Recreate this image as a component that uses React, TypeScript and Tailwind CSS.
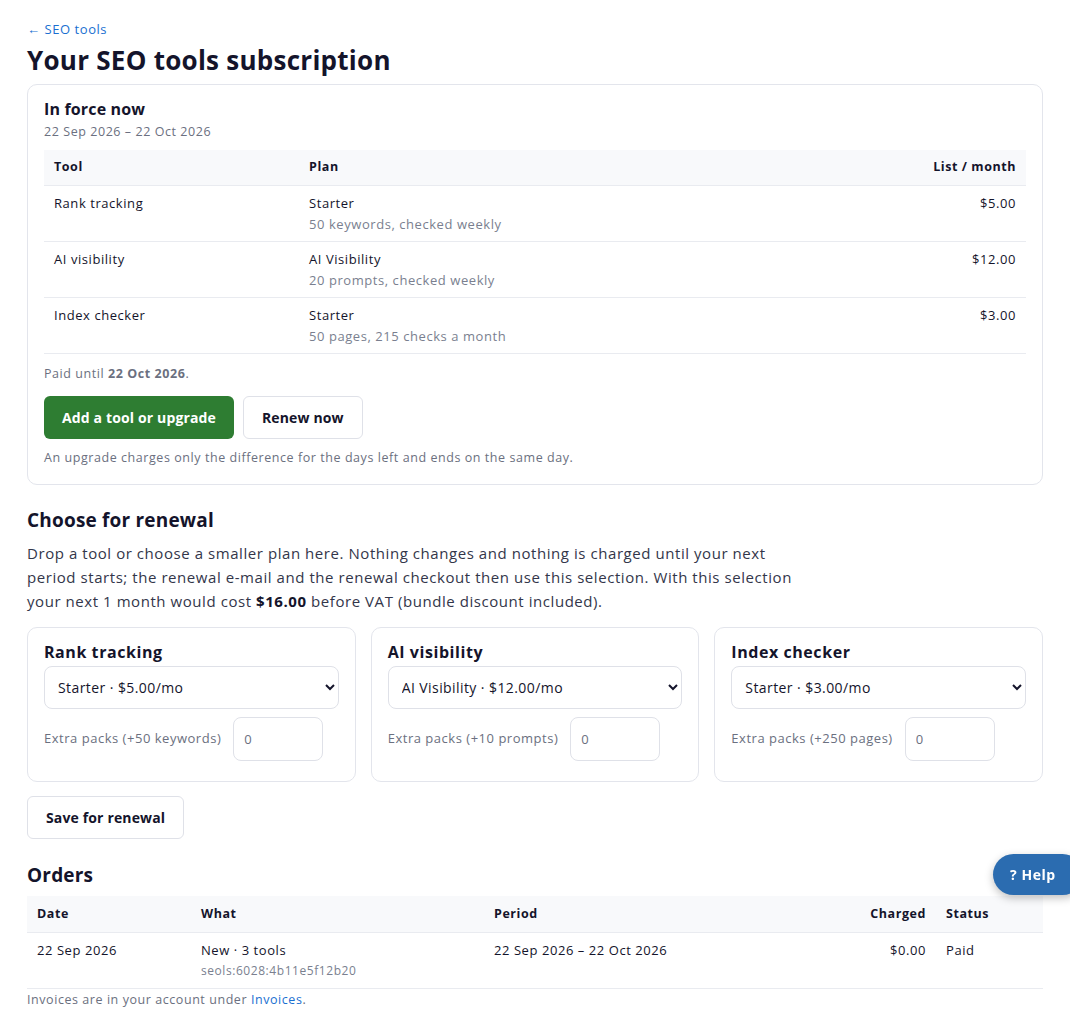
import { useState } from "react";

const CURRENT = [
  { tool: "Rank tracking", plan: "Starter", note: "50 keywords, checked weekly", price: "$5.00" },
  { tool: "AI visibility", plan: "AI Visibility", note: "20 prompts, checked weekly", price: "$12.00" },
  { tool: "Index checker", plan: "Starter", note: "50 pages, 215 checks a month", price: "$3.00" },
];

const RENEWAL = [
  { title: "Rank tracking", option: "Starter · $5.00/mo", extra: "Extra packs (+50 keywords)" },
  { title: "AI visibility", option: "AI Visibility · $12.00/mo", extra: "Extra packs (+10 prompts)" },
  { title: "Index checker", option: "Starter · $3.00/mo", extra: "Extra packs (+250 pages)" },
];

function RenewalCard({ title, option, extra }: { title: string; option: string; extra: string }) {
  const [packs, setPacks] = useState("0");
  return (
    <div className="rounded-[10px] border border-[#e3e5ec] bg-white px-4 pt-[13px] pb-5">
      <h3 className="text-[16px] font-bold leading-[22px] text-[#14142b]">{title}</h3>
      <select className="mt-[3px] h-[43px] w-full rounded-[8px] border border-[#dfe1e8] bg-white pl-[9px] pr-2 text-[14px] tracking-[0.03em] text-[#14142b]">
        <option>{option}</option>
      </select>
      <div className="mt-2 flex items-center gap-[12px]">
        <label className="text-[13px] tracking-[0.04em] text-[#6b7080]">{extra}</label>
        <input
          value={packs}
          onChange={(e) => setPacks(e.target.value)}
          className="h-[44px] w-[90px] rounded-[8px] border border-[#dfe1e8] px-[10px] text-[13px] text-[#6b7080]"
        />
      </div>
    </div>
  );
}

export default function App() {
  return (
    <div className="min-h-screen bg-white font-['Open_Sans',sans-serif] tracking-[0.035em] text-[#14142b]">
      <main className="px-[27px] pt-[16px] pb-6">
        <a href="#" className="text-[13px] text-[#1a6fd1]">← SEO tools</a>
        <h1 className="mt-[3px] text-[26px] font-bold leading-[34px] tracking-[0.01em]">Your SEO tools subscription</h1>

        {/* In force now */}
        <section className="mt-[7px] rounded-[10px] border border-[#e3e5ec] px-4 pt-[13px] pb-[16px]">
          <h2 className="text-[16px] font-bold leading-[22px] tracking-[0.01em]">In force now</h2>
          <p className="mt-[3px] text-[12.5px] text-[#6b7080]">22 Sep 2026 – 22 Oct 2026</p>
          <table className="mt-[8px] w-full border-collapse text-[13px]">
            <thead>
              <tr className="bg-[#f8f9fb] border-b border-[#e9ebf0]">
                <th className="w-[265px] px-[10px] h-[36px] text-left font-bold text-[12.5px]">Tool</th>
                <th className="px-0 text-left font-bold text-[12.5px]">Plan</th>
                <th className="px-[10px] text-right font-bold text-[12.5px]">List / month</th>
              </tr>
            </thead>
            <tbody>
              {CURRENT.map((r) => (
                <tr key={r.tool} className="border-b border-[#e9ebf0] align-top">
                  <td className="px-[10px] pt-[8px] h-[56px]">{r.tool}</td>
                  <td className="pt-[8px]">
                    <div>{r.plan}</div>
                    <div className="text-[#7a7f8f] leading-[20px]">{r.note}</div>
                  </td>
                  <td className="px-[10px] pt-[8px] text-right">{r.price}</td>
                </tr>
              ))}
            </tbody>
          </table>
          <p className="mt-[11px] text-[12.5px] text-[#6b7080]">
            Paid until <b className="font-bold">22 Oct 2026</b>.
          </p>
          <div className="mt-[12px] flex gap-[9px]">
            <button className="h-[43px] rounded-[6px] bg-[#2e7d32] px-[18px] text-[14px] font-bold tracking-[0.01em] text-white">
              Add a tool or upgrade
            </button>
            <button className="h-[43px] rounded-[6px] border border-[#dfe1e8] bg-white px-[18px] text-[14px] font-bold tracking-[0.01em]">
              Renew now
            </button>
          </div>
          <p className="mt-[10px] text-[12.5px] text-[#6b7080]">
            An upgrade charges only the difference for the days left and ends on the same day.
          </p>
        </section>

        {/* Choose for renewal */}
        <h2 className="mt-[21px] text-[19px] font-bold leading-[28px] tracking-[0.01em]">Choose for renewal</h2>
        <p className="mt-[7px] max-w-[775px] text-[15px] leading-[24px] text-[#33364a]">
          Drop a tool or choose a smaller plan here. Nothing changes and nothing is charged until your next
          period starts; the renewal e-mail and the renewal checkout then use this selection. With this selection
          your next 1 month would cost <span className="font-bold text-[#14142b]">$16.00</span> before VAT (bundle discount included).
        </p>
        <div className="mt-[14px] grid grid-cols-3 gap-[15px]">
          {RENEWAL.map((c) => (
            <RenewalCard key={c.title} {...c} />
          ))}
        </div>
        <button className="mt-[14px] h-[43px] rounded-[6px] border border-[#dfe1e8] bg-white px-[18px] text-[14px] font-bold tracking-[0.01em]">
          Save for renewal
        </button>

        {/* Orders */}
        <h2 className="mt-[22px] text-[19px] font-bold leading-[28px] tracking-[0.01em]">Orders</h2>
        <table className="mt-[7px] w-full border-collapse text-[13px]">
          <thead>
            <tr className="bg-[#f8f9fb] border-b border-[#e9ebf0]">
              <th className="w-[174px] h-[37px] px-[10px] text-left font-bold text-[12.5px]">Date</th>
              <th className="w-[293px] text-left font-bold text-[12.5px]">What</th>
              <th className="text-left font-bold text-[12.5px]">Period</th>
              <th className="pr-[10px] text-right font-bold text-[12.5px]">Charged</th>
              <th className="w-[107px] px-[10px] text-left font-bold text-[12.5px]">Status</th>
            </tr>
          </thead>
          <tbody>
            <tr className="border-b border-[#e9ebf0] align-top">
              <td className="px-[10px] pt-[8px] h-[56px]">22 Sep 2026</td>
              <td className="pt-[8px]">
                <div>New · 3 tools</div>
                <div className="text-[12px] leading-[20px] text-[#7a7f8f]">seols:6028:4b11e5f12b20</div>
              </td>
              <td className="pt-[8px]">22 Sep 2026 – 22 Oct 2026</td>
              <td className="pr-[10px] pt-[8px] text-right">$0.00</td>
              <td className="px-[10px] pt-[8px]">Paid</td>
            </tr>
          </tbody>
        </table>
        <p className="mt-[2px] text-[12.5px] text-[#6b7080]">
          Invoices are in your account under <a href="#" className="text-[#1a6fd1]">Invoices</a>.
        </p>
      </main>

      <button className="fixed left-[993px] top-[854px] h-[41px] w-[90px] rounded-full bg-[#2b6cb0] pl-[17px] text-left text-[14px] font-bold text-white shadow-[0_3px_8px_rgba(0,0,0,0.25)]">
        ? Help
      </button>
    </div>
  );
}
